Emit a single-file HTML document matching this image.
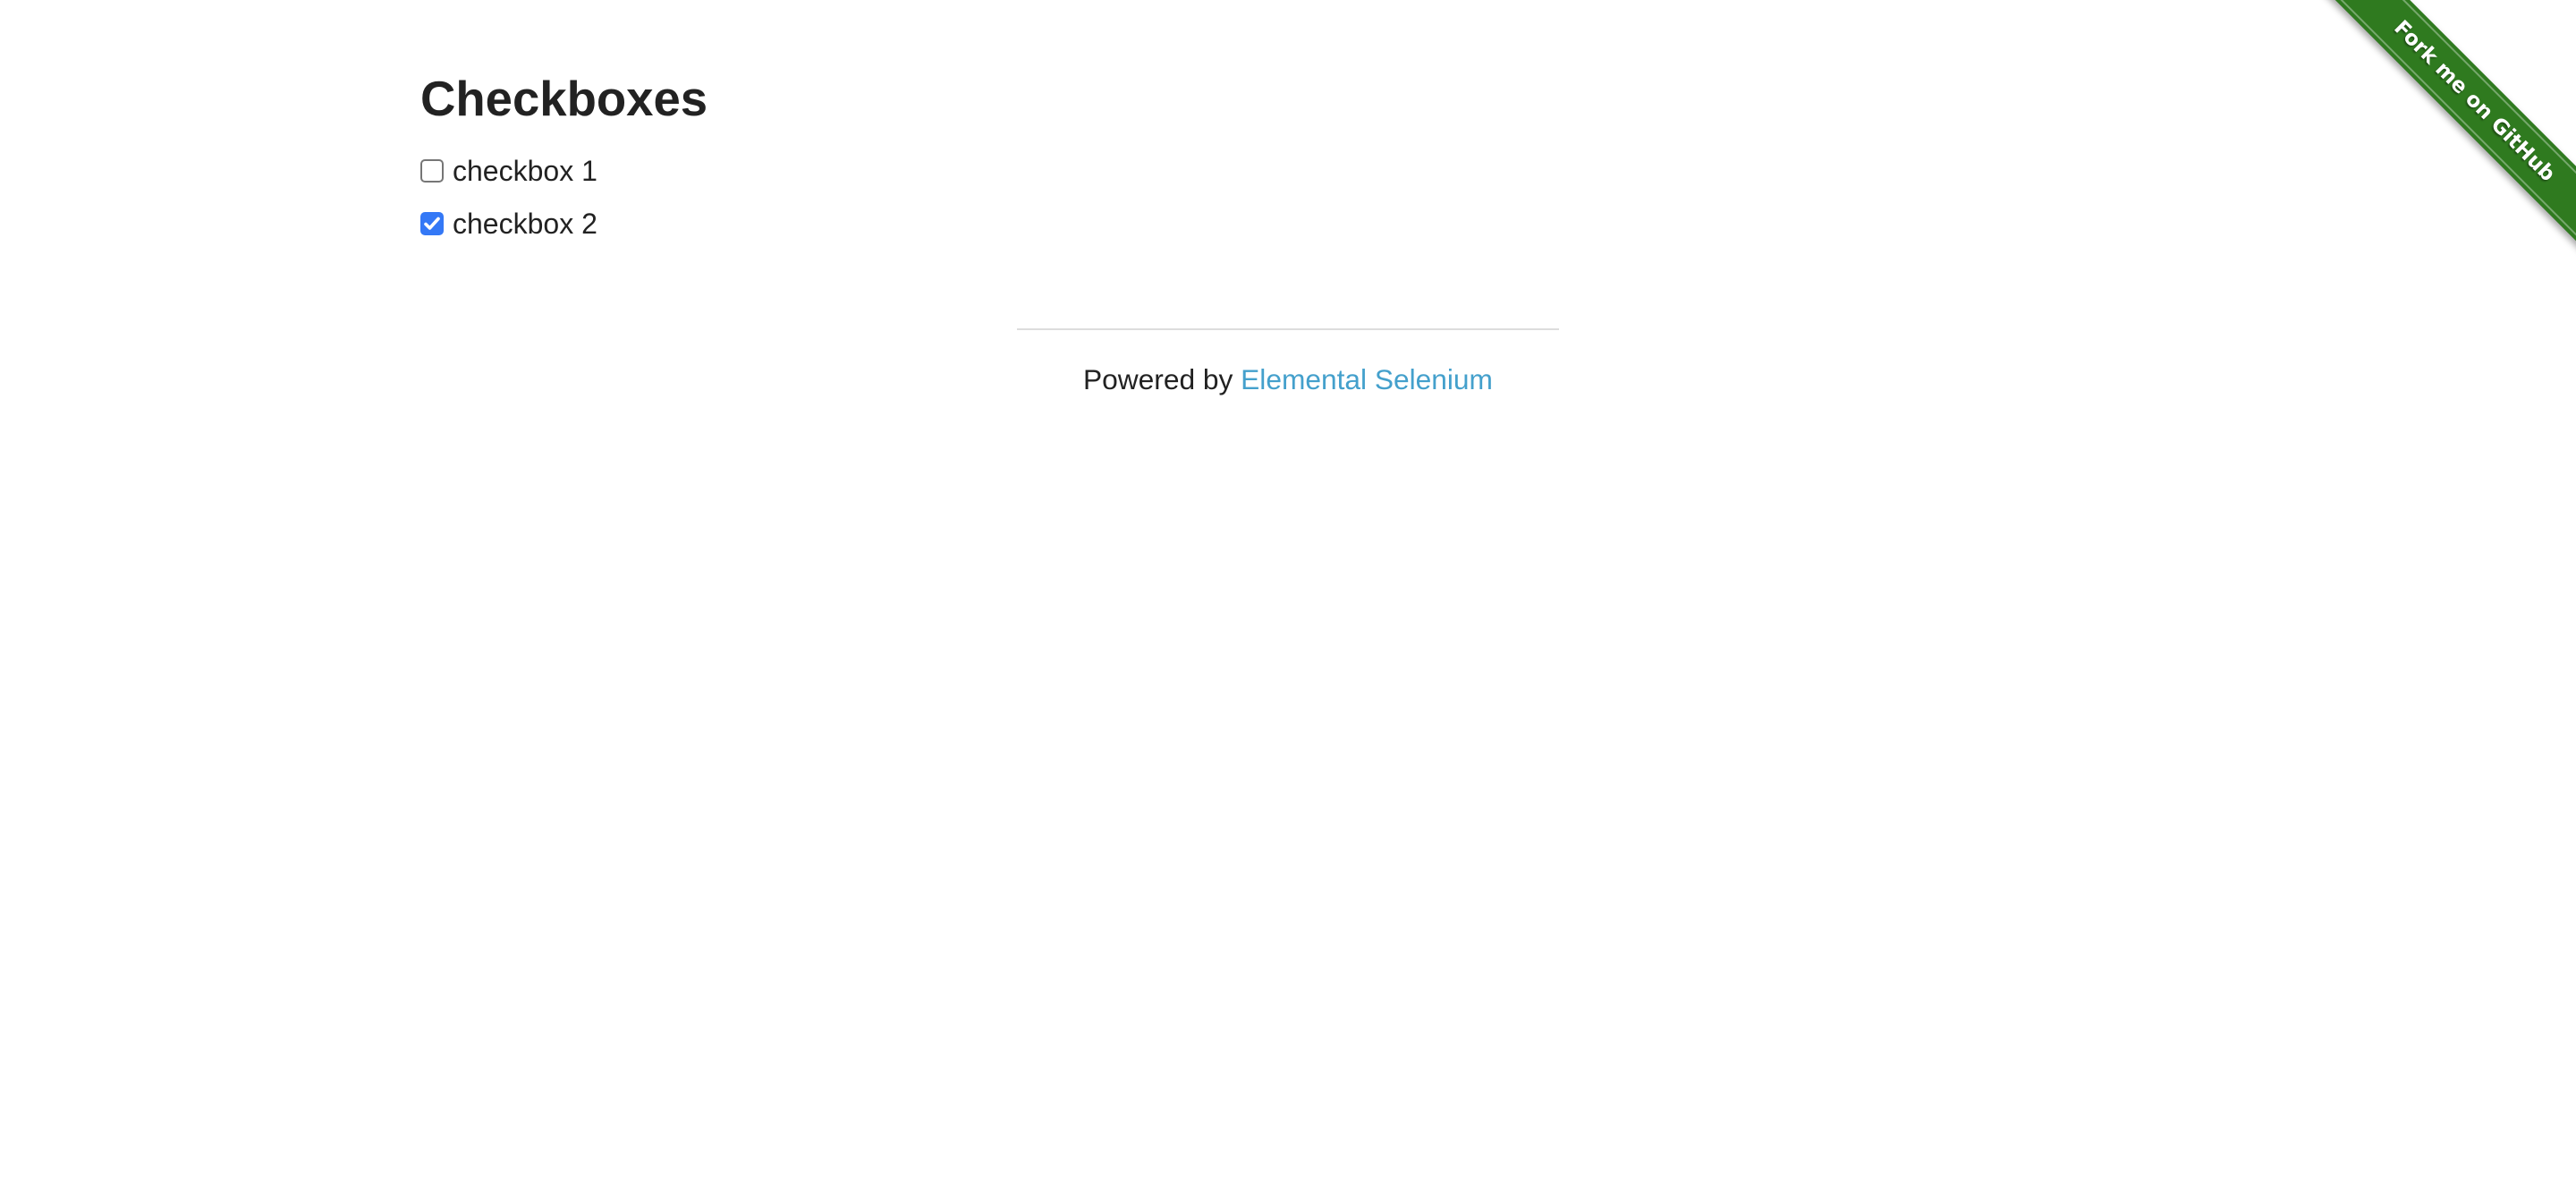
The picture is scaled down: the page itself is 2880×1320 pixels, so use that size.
<!DOCTYPE html>
<html><head><meta charset="utf-8"><style>
html,body{margin:0;padding:0;background:#fff;width:2880px;height:1320px;overflow:hidden;position:relative;font-family:"Liberation Sans",Arial,sans-serif;color:#222}
h3{position:absolute;left:470px;top:74px;margin:0;font-size:54.5px;font-weight:bold;line-height:74px;color:#222}
.cb{position:absolute;left:470px;width:26px;height:26px;box-sizing:border-box;border-radius:5px}
.c1{top:178px;border:2px solid #767676;background:#fff}
.c2{top:237px;background:#3478f6}
.lbl{position:absolute;left:506px;font-size:32px;line-height:40px;color:#222}
hr{position:absolute;left:1137px;width:606px;top:367px;margin:0;border:0;height:2px;background:#ddd}
.ft{position:absolute;left:1211px;top:404px;font-size:31.7px;line-height:40px;color:#222;white-space:nowrap}
.ft a{color:#44a0cc;text-decoration:none}
.rib{position:absolute;left:2516px;top:84px;width:500px;height:59px;background:#2f7a1f;transform:rotate(45deg);box-shadow:0 4px 8px rgba(0,0,0,.35);color:#fff;font-size:23px;font-weight:bold;line-height:59px;text-align:center;font-family:"DejaVu Sans",sans-serif;text-shadow:0 2px 2px rgba(0,0,0,.4)}
.rib:before,.rib:after{content:"";position:absolute;left:0;right:0;height:2px;background:rgba(255,255,255,.35)}
.rib:before{top:4px}.rib:after{bottom:4px}
</style></head><body>
<h3>Checkboxes</h3>
<div class="cb c1"></div>
<div class="lbl" style="top:171px">checkbox 1</div>
<div class="cb c2"><svg width="26" height="26" viewBox="0 0 26 26"><path d="M6 13.5 L10.5 18 L20 7.5" fill="none" stroke="#fff" stroke-width="3.6" stroke-linecap="round" stroke-linejoin="round"/></svg></div>
<div class="lbl" style="top:230px">checkbox 2</div>
<hr>
<div class="ft">Powered by <a>Elemental Selenium</a></div>
<div class="rib">Fork me on GitHub</div>
</body></html>
